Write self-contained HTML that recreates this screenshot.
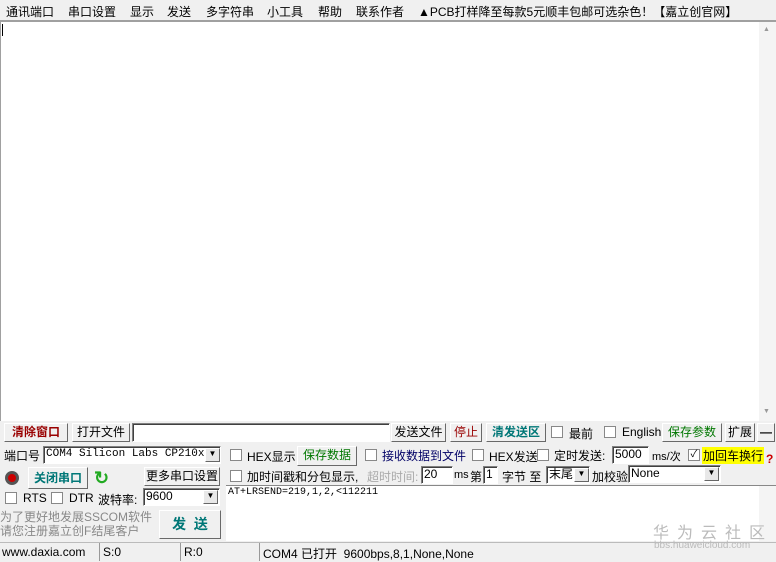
<!DOCTYPE html><html><head><meta charset="utf-8"><style>
*{box-sizing:border-box;margin:0;padding:0}
body{width:776px;height:561px;background:#f0f0f0;font:12px "Liberation Sans","Noto Sans CJK SC",sans-serif;position:relative;overflow:hidden;color:#000}
.a{position:absolute;white-space:nowrap}
.m{position:absolute;top:3px;white-space:nowrap}
.btn{position:absolute;border:1px solid;border-color:#fff #696969 #696969 #fff;background:#f0f0f0;text-align:center;font-size:12px;line-height:16px}
.in{position:absolute;background:#fff;border:1px solid;border-color:#808080 #fff #fff #808080;box-shadow:inset 1px 1px 0 #404040;font-size:12px;line-height:15px;padding-left:2px;white-space:nowrap;overflow:hidden}
.cb{position:absolute;width:12px;height:12px;background:#fff;border:1px solid #888;font-size:10px;line-height:10px;text-align:center}
.dd{position:absolute;width:15px;background:#e8e8e8;border:1px solid;border-color:#fff #666 #666 #fff;font-size:8px;text-align:center}
</style></head><body>
<div class="m" style="left:6px">通讯端口</div>
<div class="m" style="left:68px">串口设置</div>
<div class="m" style="left:130px">显示</div>
<div class="m" style="left:167px">发送</div>
<div class="m" style="left:206px">多字符串</div>
<div class="m" style="left:267px">小工具</div>
<div class="m" style="left:318px">帮助</div>
<div class="m" style="left:356px">联系作者</div>
<div class="m" style="left:418px">▲PCB打样降至每款5元顺丰包邮可选杂色！【嘉立创官网】</div>
<div class="a" style="left:0;top:20px;width:776px;height:401px;background:#fff;border-top:2px solid #a0a0a0;border-left:1px solid #a0a0a0"></div>
<div class="a" style="left:2px;top:24px;width:1px;height:12px;background:#000"></div>
<div class="a" style="left:759px;top:22px;width:17px;height:399px;background:#f4f4f4"></div>
<div class="a" style="left:763px;top:26px;font-size:7px;color:#999">▲</div>
<div class="a" style="left:763px;top:408px;font-size:7px;color:#999">▼</div>
<div class="btn" style="left:4px;top:423px;width:64px;height:19px;color:#900;font-weight:bold">清除窗口</div>
<div class="btn" style="left:72px;top:423px;width:58px;height:19px">打开文件</div>
<div class="in" style="left:132px;top:423px;width:258px;height:19px"></div>
<div class="btn" style="left:391px;top:423px;width:55px;height:19px">发送文件</div>
<div class="btn" style="left:450px;top:423px;width:32px;height:19px;color:#900">停止</div>
<div class="btn" style="left:486px;top:423px;width:60px;height:19px;color:#077;font-weight:bold">清发送区</div>
<div class="cb" style="left:551px;top:426px"></div><div class="a" style="left:569px;top:425px">最前</div>
<div class="cb" style="left:604px;top:426px"></div><div class="a" style="left:622px;top:425px">English</div>
<div class="btn" style="left:662px;top:423px;width:60px;height:19px;color:#070">保存参数</div>
<div class="btn" style="left:725px;top:423px;width:30px;height:19px">扩展</div>
<div class="btn" style="left:757px;top:423px;width:18px;height:19px;font-weight:bold">—</div>
<div class="a" style="left:4px;top:447px">端口号</div>
<div class="in" style="left:43px;top:446px;width:178px;height:18px;font-family:'Liberation Mono',monospace;font-size:11px">COM4 Silicon Labs CP210x U</div>
<div class="dd" style="left:205px;top:448px;height:14px">▼</div>
<div class="a" style="left:5px;top:471px;width:14px;height:14px;border-radius:50%;background:#c00;border:3px solid #555"></div>
<div class="btn" style="left:28px;top:467px;width:60px;height:22px;color:#077;font-weight:bold;line-height:20px">关闭串口</div>
<div class="a" style="left:94px;top:468px;color:#2a2;font-size:18px;font-weight:bold">↻</div>
<div class="btn" style="left:144px;top:467px;width:76px;height:19px">更多串口设置</div>
<div class="cb" style="left:5px;top:492px"></div><div class="a" style="left:23px;top:491px">RTS</div>
<div class="cb" style="left:51px;top:492px"></div><div class="a" style="left:69px;top:491px">DTR</div>
<div class="a" style="left:98px;top:491px">波特率:</div>
<div class="in" style="left:143px;top:488px;width:77px;height:18px">9600</div>
<div class="dd" style="left:203px;top:490px;height:14px">▼</div>
<div class="a" style="left:0;top:510px;color:#888;line-height:14px">为了更好地发展SSCOM软件<br>请您注册嘉立创F结尾客户</div>
<div class="btn" style="left:159px;top:510px;width:62px;height:29px;color:#077;font-weight:bold;font-size:14px;line-height:27px">发&nbsp;&nbsp;送</div>
<div class="cb" style="left:230px;top:449px"></div><div class="a" style="left:247px;top:448px">HEX显示</div>
<div class="btn" style="left:297px;top:446px;width:60px;height:20px;color:#070">保存数据</div>
<div class="cb" style="left:365px;top:449px"></div><div class="a" style="left:382px;top:447px;color:#006">接收数据到文件</div>
<div class="cb" style="left:472px;top:449px"></div><div class="a" style="left:489px;top:448px">HEX发送</div>
<div class="cb" style="left:537px;top:449px"></div><div class="a" style="left:554px;top:447px">定时发送:</div>
<div class="in" style="left:612px;top:446px;width:37px;height:18px">5000</div>
<div class="a" style="left:652px;top:448px;font-size:11px">ms/次</div>
<div class="cb" style="left:688px;top:449px">✓</div>
<div class="a" style="left:702px;top:447px;background:#ff0;padding:0 1px">加回车换行</div>
<div class="a" style="left:766px;top:452px;color:#c00;font-weight:bold">?</div>
<div class="cb" style="left:230px;top:470px"></div><div class="a" style="left:247px;top:468px">加时间戳和分包显示,</div>
<div class="a" style="left:367px;top:468px;color:#aaa">超时时间:</div>
<div class="in" style="left:421px;top:466px;width:32px;height:18px">20</div>
<div class="a" style="left:454px;top:469px;font-size:11px">ms</div>
<div class="a" style="left:470px;top:468px">第</div>
<div class="in" style="left:483px;top:466px;width:15px;height:18px">1</div>
<div class="a" style="left:502px;top:468px">字节 至</div>
<div class="in" style="left:546px;top:466px;width:44px;height:18px">末尾</div>
<div class="dd" style="left:574px;top:468px;height:14px">▼</div>
<div class="a" style="left:592px;top:468px">加校验</div>
<div class="in" style="left:628px;top:465px;width:93px;height:18px">None</div>
<div class="dd" style="left:704px;top:467px;height:14px">▼</div>
<div class="a" style="left:226px;top:485px;width:550px;height:56px;background:#fff;border-top:1px solid #888"></div>
<div class="a" style="left:228px;top:487px;font-family:'Liberation Mono',monospace;font-size:10px">AT+LRSEND=219,1,2,&lt;112211</div>
<div class="a" style="left:759px;top:486px;width:17px;height:55px;background:#f4f4f4"></div>
<div class="a" style="left:653px;top:519px;font-size:16px;color:#bbb;letter-spacing:8px">华为云社区</div>
<div class="a" style="left:654px;top:540px;font-size:10px;color:#bbb">bbs.huaweicloud.com</div>
<div class="a" style="left:0;top:542px;width:776px;height:19px;border-top:1px solid #bbb"></div>
<div class="a" style="left:2px;top:545px;font-size:12px">www.daxia.com</div>
<div class="a" style="left:99px;top:543px;height:18px;border-left:1px solid #999"></div>
<div class="a" style="left:103px;top:545px">S:0</div>
<div class="a" style="left:180px;top:543px;height:18px;border-left:1px solid #999"></div>
<div class="a" style="left:184px;top:545px">R:0</div>
<div class="a" style="left:259px;top:543px;height:18px;border-left:1px solid #999"></div>
<div class="a" style="left:263px;top:545px">COM4 已打开&nbsp; 9600bps,8,1,None,None</div>
</body></html>
